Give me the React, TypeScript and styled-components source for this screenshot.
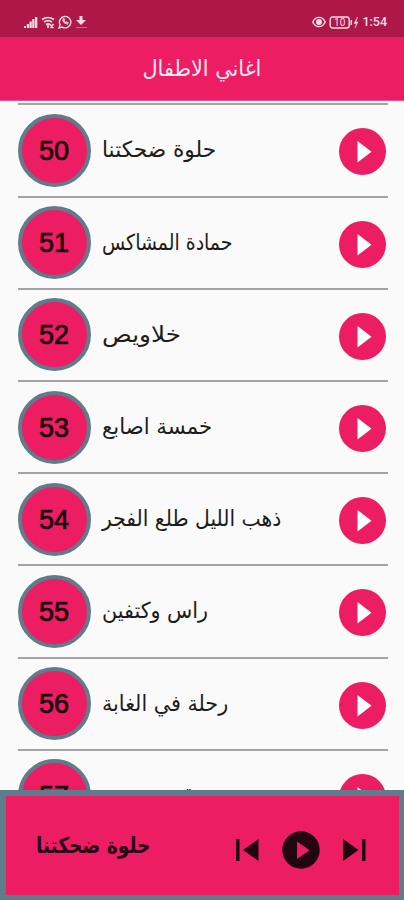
import React from "react";
import styled, { createGlobalStyle } from "styled-components";

const PINK = "#ec1d63";
const SLATE = "#5f7c8b";

const GlobalStyle = createGlobalStyle`
  * { box-sizing: border-box; }
  body { margin: 0; background: #fafafa; font-family: "Liberation Sans", "DejaVu Sans", sans-serif; }
`;

const Screen = styled.div`
  width: 404px;
  height: 900px;
  display: flex;
  flex-direction: column;
  overflow: hidden;
  background: #fafafa;
`;

const StatusBar = styled.div`
  flex: none;
  height: 37px;
  padding: 7px 17px 0 24px;
  display: flex;
  align-items: center;
  justify-content: space-between;
  background: #ad1849;
  color: #f6dbe4;
`;

const StatusGroup = styled.div`
  display: flex;
  align-items: center;
  gap: 3px;
`;

const Clock = styled.span`
  font: 500 12.5px/16px Roboto, sans-serif;
`;

const Header = styled.header`
  flex: none;
  height: 64px;
  display: flex;
  align-items: center;
  justify-content: center;
  background: ${PINK};
  border-bottom: 1px solid #dc5b8c;
`;

const Title = styled.h1<{ $stretch: number }>`
  margin: 0;
  font: 400 22px/30px "DejaVu Sans", sans-serif;
  color: #ffe9f1;
  transform: scaleX(${(p) => p.$stretch});
`;

const List = styled.main`
  flex: 1;
  min-height: 0;
  overflow: hidden;
  padding: 2.4px 16px 0 17.5px;
`;

const Row = styled.div`
  height: 92.2px;
  display: flex;
  align-items: center;
  border-top: 2px solid #a3a3a3;
`;

const NumberBadge = styled.div`
  flex: none;
  width: 73px;
  height: 73px;
  display: flex;
  align-items: center;
  justify-content: center;
  border: 4.5px solid ${SLATE};
  border-radius: 50%;
  background: ${PINK};
  color: #16060c;
  font: 400 27px/30px "Liberation Sans", sans-serif;
  padding-top: 1px;
  -webkit-text-stroke: 0.7px #16060c;
`;

const SongTitle = styled.div<{ $stretch: number }>`
  flex: 1;
  margin-left: 11px;
  white-space: nowrap;
  color: #1c1c1c;
  font: 400 22px/30px "DejaVu Sans", sans-serif;
  transform: scaleX(${(p) => p.$stretch});
  transform-origin: left center;
`;

const PlayButton = styled.button`
  flex: none;
  width: 47px;
  height: 47px;
  margin: 3px 2.5px 0 0;
  padding: 0;
  border: 0;
  border-radius: 50%;
  background: ${PINK};
  svg { display: block; }
`;

const Player = styled.footer`
  flex: none;
  height: 110px;
  display: flex;
  align-items: center;
  padding: 0 33.5px 0 30px;
  border: solid ${SLATE};
  border-width: 6px 5px 5px 6px;
  background: ${PINK};
`;

const NowPlaying = styled.div<{ $stretch: number }>`
  flex: 1;
  color: #2a0714;
  font: 700 22px/30px "DejaVu Sans", sans-serif;
  white-space: nowrap;
  transform: scaleX(${(p) => p.$stretch});
  transform-origin: left center;
`;

const Controls = styled.div`
  display: flex;
  align-items: center;
  gap: 23px;
  padding-top: 8px;
`;

const ControlButton = styled.button`
  padding: 0;
  border: 0;
  background: none;
  svg { display: block; }
`;

const songs = [
  { number: 50, title: "حلوة ضحكتنا", stretch: 0.985 },
  { number: 51, title: "حمادة المشاكس", stretch: 0.86 },
  { number: 52, title: "خلاويص", stretch: 1.12 },
  { number: 53, title: "خمسة اصابع", stretch: 0.965 },
  { number: 54, title: "ذهب الليل طلع الفجر", stretch: 0.923 },
  { number: 55, title: "راس وكتفين", stretch: 0.94 },
  { number: 56, title: "رحلة في الغابة", stretch: 0.94 },
  { number: 57, title: "قصة موسى", stretch: 0.84 },
];

const SignalIcon = () => (
  <svg width="14" height="13" viewBox="0 0 14 13" fill="currentColor">
    <path d="M0 10h2v2H0zM2.8 8h2.2v4H2.8zM5.5 5.5h2.3V12H5.5zM8.2 3h2.3v9H8.2zM11 1h2.3v11H11z" />
  </svg>
);

const WifiIcon = () => (
  <svg width="14" height="13" viewBox="0 0 14 13" fill="none" stroke="currentColor" strokeWidth="1.7">
    <path d="M1 3.5q6-4 12 0M3 6q4-2.7 8 0M5 8.500q2-1.400 4 0M7 12V9M8.500 8l4 4M12.500 8l-3 4" />
  </svg>
);

const WhatsappIcon = () => (
  <svg width="14" height="14" viewBox="0 0 13 13" fill="none" stroke="currentColor" strokeWidth="1.3">
    <path d="M1 12l.9-3A5.3 5.3 0 1 1 4 11.2z" />
    <path d="M4.6 3.8c-.6 2 2 4.8 4.3 4.5l.4-1-1.5-.8-.8.7-1.5-1.6.6-.8-.6-1.4z" strokeWidth="1" />
  </svg>
);

const DownloadIcon = () => (
  <svg width="12" height="13" viewBox="0 0 12 13" fill="currentColor">
    <path d="M4.500 0h3v4H11L6 9 1 4h3.500z" />
    <path d="M1 11h11v1H1z" opacity=".4" />
  </svg>
);

const EyeIcon = () => (
  <svg width="14" height="12" viewBox="0 0 14 12" fill="none" stroke="currentColor" strokeWidth="1.4">
    <path d="M.8 6C3.5-.2 10.5-.2 13.2 6 10.5 12.2 3.5 12.2.8 6z" />
    <circle cx="7" cy="6" r="2.300" fill="currentColor" />
  </svg>
);

const BatteryIcon = () => (
  <svg width="30" height="13" viewBox="0 0 30 13" fill="none" stroke="currentColor">
    <rect x="1.2" y="1" width="19" height="11" rx="2.5" strokeWidth="1.4" />
    <path d="M22.3 4v5" strokeWidth="1.5" />
    <path d="M28.5 1l-3.500 6.500h2.500L26 12l3-6h-2z" fill="currentColor" strokeWidth=".4" />
    <text x="10.7" y="10" textAnchor="middle" fill="currentColor" stroke="none" fontFamily="Roboto" fontSize="10">10</text>
  </svg>
);

const App = () => (
  <>
    <GlobalStyle />
    <Screen>
      <StatusBar>
        <StatusGroup>
          <SignalIcon />
          <WifiIcon />
          <WhatsappIcon />
          <DownloadIcon />
        </StatusGroup>
        <StatusGroup>
          <EyeIcon />
          <BatteryIcon />
          <Clock>1:54</Clock>
        </StatusGroup>
      </StatusBar>
      <Header>
        <Title dir="rtl" $stretch={0.945}>اغاني الاطفال</Title>
      </Header>
      <List>
        {songs.map((song) => (
          <Row key={song.number}>
            <NumberBadge>{song.number}</NumberBadge>
            <SongTitle $stretch={song.stretch}>{song.title}</SongTitle>
            <PlayButton aria-label={song.title}>
              <svg width="47" height="47" viewBox="0 0 47 47">
                <path d="M18.500 13v21.500l14-10.700z" fill="#fff" />
              </svg>
            </PlayButton>
          </Row>
        ))}
      </List>
      <Player>
        <NowPlaying $stretch={0.845}>حلوة ضحكتنا</NowPlaying>
        <Controls>
          <ControlButton aria-label="previous">
            <svg width="23" height="22" viewBox="0 0 23 22" fill="#23050f">
              <path d="M0 0h3.500v22H0zM22.500 0v22L7 11z" />
            </svg>
          </ControlButton>
          <ControlButton aria-label="play">
            <svg width="38" height="38" viewBox="0 0 38 38">
              <circle cx="19" cy="19" r="18.700" fill="#23050f" />
              <path d="M15 10.500v17.500l12.500-8.700z" fill={PINK} />
            </svg>
          </ControlButton>
          <ControlButton aria-label="next">
            <svg width="23" height="22" viewBox="0 0 23 22" fill="#23050f">
              <path d="M0 0v22l15.500-11zM19 0h3.500v22H19z" />
            </svg>
          </ControlButton>
        </Controls>
      </Player>
    </Screen>
  </>
);

export default App;
